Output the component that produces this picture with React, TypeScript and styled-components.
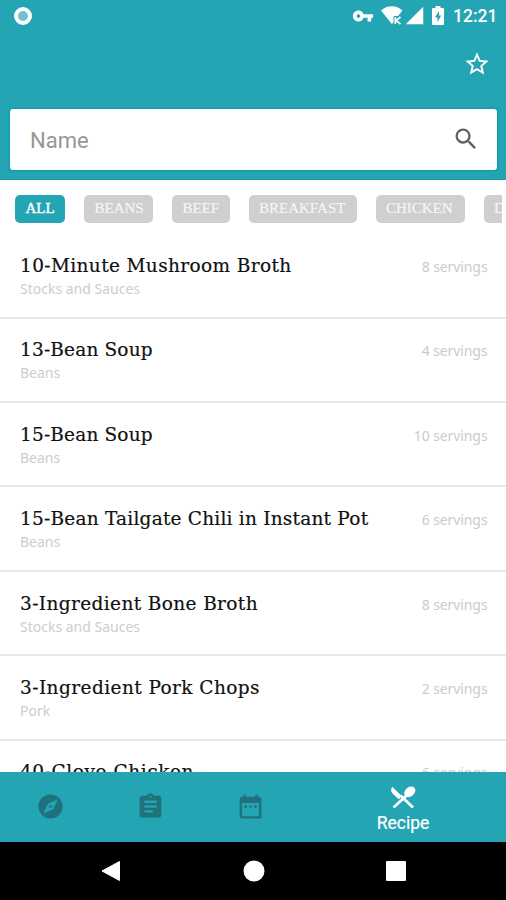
import React from 'react';
import styled, { createGlobalStyle } from 'styled-components';
import {
  MdVpnKey,
  MdStarBorder,
  MdSearch,
  MdExplore,
  MdAssignment,
  MdDateRange,
  MdSignalCellular4Bar,
} from 'react-icons/md';

const TEAL = '#23a5b4';

const GlobalStyle = createGlobalStyle`
  * { box-sizing: border-box; }
  body { margin: 0; background: #fff; }
`;

const Screen = styled.div`
  width: 506px;
  height: 900px;
  display: flex;
  flex-direction: column;
  overflow: hidden;
  background: #fff;
  font-family: Roboto, sans-serif;
`;

const Header = styled.header`
  flex: none;
  height: 180px;
  display: flex;
  flex-direction: column;
  background: ${TEAL};
  border-bottom: 1px solid #1399a8;
`;

const StatusBar = styled.div`
  height: 32px;
  display: flex;
  align-items: center;
  padding: 0 10px 1px 14px;
  color: #fff;
`;

const SyncDot = styled.span`
  width: 18px;
  height: 18px;
  margin-right: auto;
  border: 4px solid #fff;
  border-radius: 50%;
  background: #6cc4cc;
`;

const StatusIcon = styled.span<{ $gap: number }>`
  display: flex;
  margin-right: ${(p) => p.$gap}px;
`;

const Clock = styled.span`
  width: 43px;
  font-size: 17.5px;
  font-weight: 500;
  line-height: 20px;
  white-space: nowrap;
`;

const ActionBar = styled.div`
  height: 77px;
  display: flex;
  justify-content: flex-end;
  padding: 18px 15px 0 0;
  color: #fff;
`;

const SearchBox = styled.div`
  height: 61px;
  margin: 0 9px 0 10px;
  padding: 1px 17px 0 20px;
  display: flex;
  align-items: center;
  justify-content: space-between;
  border-radius: 3px;
  background: #fff;
  box-shadow: 0 0 2px 1px #1298a6;
  color: #606060;

  svg {
    margin-bottom: 2px;
  }
`;

const Placeholder = styled.span`
  font-size: 22px;
  color: #969696;
`;

const Chips = styled.nav`
  flex: none;
  height: 54px;
  margin-right: 4px;
  padding: 15px 0 0 15px;
  display: flex;
  gap: 19px;
  overflow: hidden;
`;

const Chip = styled.span<{ $width: number; $active?: boolean }>`
  flex: none;
  width: ${(p) => p.$width}px;
  height: 28px;
  padding-left: 10.5px;
  border-radius: 5px;
  background: ${(p) => (p.$active ? TEAL : '#cfcfcf')};
  color: ${(p) => (p.$active ? '#fff' : '#f6f6f6')};
  font: 15px/27px 'Liberation Serif', serif;
  -webkit-text-stroke: ${(p) => (p.$active ? 0.4 : 0.15)}px currentColor;
  white-space: nowrap;
`;

const List = styled.main`
  flex: 1;
  min-height: 0;
  padding-top: 0.2px;
  overflow: hidden;
`;

const Row = styled.article`
  height: 84.4px;
  display: flex;
  justify-content: space-between;
  padding: 18.8px 18.5px 0 20px;
  border-bottom: 2px solid #e7e7e7;
`;

const Title = styled.h2<{ $spacing: number }>`
  margin: 0;
  font: 400 18.5px/26px 'DejaVu Serif', serif;
  letter-spacing: ${(p) => p.$spacing}px;
  color: #111;
  -webkit-text-stroke: 0.2px currentColor;
  white-space: nowrap;
`;

const Category = styled.p`
  margin: 0;
  font: 14px/20px 'Noto Sans', sans-serif;
  color: #cdcdcd;
`;

const Servings = styled.span`
  font: 14px/20px 'Noto Sans', sans-serif;
  letter-spacing: -0.1px;
  padding-top: 4px;
  color: #cbcbcb;
  white-space: nowrap;
`;

const TabBar = styled.nav`
  flex: none;
  height: 70px;
  display: grid;
  grid-template-columns: 100px 100px 100px 206px;
  background: ${TEAL};
`;

const Tab = styled.div<{ $active?: boolean }>`
  display: flex;
  flex-direction: column;
  align-items: center;
  padding-top: ${(p) => (p.$active ? 14 : 20)}px;
  color: ${(p) => (p.$active ? '#fff' : '#1f717c')};
  font-size: 17.5px;
  line-height: 22px;
  -webkit-text-stroke: 0.2px currentColor;

  svg {
    margin-bottom: 3px;
  }
`;

const SystemBar = styled.footer`
  flex: none;
  height: 58px;
  display: grid;
  grid-template-columns: repeat(3, 142.5px);
  align-items: center;
  justify-content: center;
  justify-items: center;
  padding-left: 1px;
  background: #000;
`;

const chips = [
  { label: 'ALL', width: 50 },
  { label: 'BEANS', width: 69 },
  { label: 'BEEF', width: 57.5 },
  { label: 'BREAKFAST', width: 108 },
  { label: 'CHICKEN', width: 89 },
  { label: 'DESSERT', width: 90 },
];

const recipes = [
  { name: '10-Minute Mushroom Broth', category: 'Stocks and Sauces', servings: 8, spacing: 0.38 },
  { name: '13-Bean Soup', category: 'Beans', servings: 4, spacing: 0.17 },
  { name: '15-Bean Soup', category: 'Beans', servings: 10, spacing: 0.17 },
  { name: '15-Bean Tailgate Chili in Instant Pot', category: 'Beans', servings: 6, spacing: 0.22 },
  { name: '3-Ingredient Bone Broth', category: 'Stocks and Sauces', servings: 8, spacing: 0.38 },
  { name: '3-Ingredient Pork Chops', category: 'Pork', servings: 2, spacing: 0.43 },
  { name: '40-Clove Chicken', category: 'Chicken', servings: 6, spacing: 0.58 },
];

const WifiIcon = () => (
  <svg width="22" height="19" viewBox="0 0 22 19">
    <path d="M0 4.500C6-1.200 15.500-1.200 21.500 4.500L17 10H12.500v6.500L10.800 18Z" fill="#fff" />
    <path d="M14.300 11v7M19.500 11l-4.500 3.500 4.500 3.500" stroke="#fff" strokeWidth="1.700" fill="none" />
  </svg>
);

const BatteryIcon = () => (
  <svg width="12" height="19" viewBox="0 0 12 19">
    <path
      d="M3.500 0h5v2H11q1 0 1 1v15q0 1-1 1H1q-1 0-1-1V3q0-1 1-1h2.500ZM7 5 3 11.500h2.500V16L9.200 9.500H7Z"
      fill="#fff"
      fillRule="evenodd"
    />
  </svg>
);

const CutleryIcon = () => (
  <svg width="26" height="23" viewBox="0 0 26 23" fill="none" stroke="#fff">
    <path d="M3.500 21.500 16 10M10.500 9.500 23 21.500" strokeWidth="2.800" />
    <path d="M2.200.8 12 10.200 8.800 13.300 2.800 7.800Q-.200 4.500 2.200.8Z" fill="#fff" stroke="none" />
    <ellipse cx="19.800" cy="5.800" rx="6.200" ry="4.600" transform="rotate(-42 19.800 5.800)" fill="#fff" stroke="none" />
  </svg>
);

export default function App() {
  return (
    <Screen>
      <GlobalStyle />
      <Header>
        <StatusBar>
          <SyncDot />
          <StatusIcon $gap={7}><MdVpnKey size={22} /></StatusIcon>
          <StatusIcon $gap={1}><WifiIcon /></StatusIcon>
          <StatusIcon $gap={7}><MdSignalCellular4Bar size={21} /></StatusIcon>
          <StatusIcon $gap={9}><BatteryIcon /></StatusIcon>
          <Clock>12:21</Clock>
        </StatusBar>
        <ActionBar><MdStarBorder size={28} /></ActionBar>
        <SearchBox>
          <Placeholder>Name</Placeholder>
          <MdSearch size={28} />
        </SearchBox>
      </Header>
      <Chips>
        {chips.map((c, i) => (
          <Chip key={c.label} $width={c.width} $active={i === 0}>{c.label}</Chip>
        ))}
      </Chips>
      <List>
        {recipes.map((r) => (
          <Row key={r.name}>
            <div>
              <Title $spacing={r.spacing}>{r.name}</Title>
              <Category>{r.category}</Category>
            </div>
            <Servings>{r.servings} servings</Servings>
          </Row>
        ))}
      </List>
      <TabBar>
        <Tab><MdExplore size={29} /></Tab>
        <Tab><MdAssignment size={29} /></Tab>
        <Tab><MdDateRange size={29} /></Tab>
        <Tab $active><CutleryIcon />Recipe</Tab>
      </TabBar>
      <SystemBar>
        <svg width="20" height="22" viewBox="0 0 20 22"><path d="M1 11 18.500 1.500v19Z" fill="#fff" stroke="#fff" strokeLinejoin="round" /></svg>
        <svg width="22" height="22"><circle cx="11" cy="11" r="10.500" fill="#fff" /></svg>
        <svg width="20" height="20"><rect width="20" height="20" rx="1" fill="#fff" /></svg>
      </SystemBar>
    </Screen>
  );
}
